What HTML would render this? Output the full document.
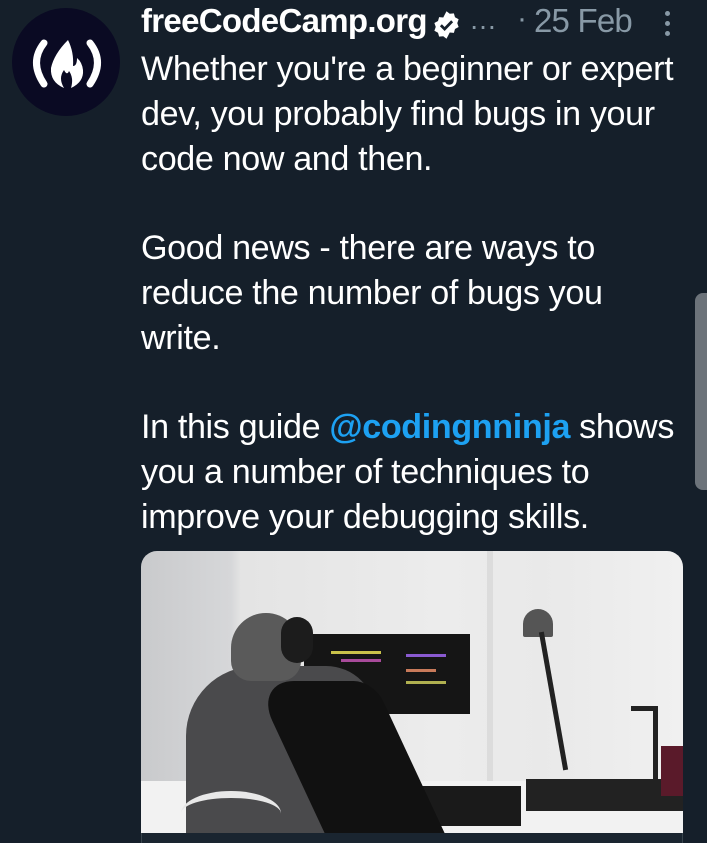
<!DOCTYPE html>
<html><head><meta charset="utf-8"><style>
*{margin:0;padding:0;box-sizing:border-box}
body{width:707px;height:843px;overflow:hidden;background:#151f2a;font-family:"Liberation Sans",sans-serif;position:relative}
.av{position:absolute;left:12px;top:8px;width:108px;height:108px;border-radius:50%;background:#0a0a23}
.name{position:absolute;left:141px;top:2px;color:#fff;font-weight:bold;font-size:33px;letter-spacing:-0.7px;white-space:nowrap}
.ell{position:absolute;left:469px;top:4px;color:#8899a6;font-size:28px}
.dot{position:absolute;left:517px;top:2px;color:#8899a6;font-size:30px}
.date{position:absolute;left:534px;top:2px;color:#8899a6;font-size:33px;letter-spacing:-0.8px;white-space:nowrap}
.dots{position:absolute;left:665px;top:11px;width:5px}
.dots i{display:block;width:5px;height:5px;border-radius:50%;background:#8899a6;margin-bottom:5px}
.txt{position:absolute;left:141px;top:47px;color:#fff;font-size:34.1px;line-height:44.8px;letter-spacing:-0.35px;white-space:nowrap}
.txt a{color:#1da1f2;font-weight:bold;text-decoration:none}
.sb{position:absolute;left:695px;top:293px;width:14px;height:197px;background:#6c737a;border-radius:8px 0 0 8px}
.img{position:absolute;left:141px;top:551px;width:542px;height:282px;border-radius:16px 16px 0 0;overflow:hidden;background:linear-gradient(90deg,#c9cacc 0,#d6d7d9 90px,#e4e4e4 100px,#ececec 300px,#e9e9e9 400px,#f0f0f0 100%)}
.img div{position:absolute}
.bot{position:absolute;left:141px;top:833px;width:542px;height:10px;background:#1a2530;border-left:1px solid #38444d;border-right:1px solid #38444d}
</style></head><body>
<div class="av"><svg width="108" height="108" viewBox="0 0 108 108">
<path d="M32 35 Q17 54 32 76" stroke="#fff" stroke-width="7" fill="none" stroke-linecap="round"/>
<path d="M78 35 Q93 54 78 76" stroke="#fff" stroke-width="7" fill="none" stroke-linecap="round"/>
<path d="M56 32 Q42 46 39 60 Q38 74 52 80 Q46 70 52 62 Q55 68 57 63 Q62 70 59 80 Q72 74 71 62 Q70 54 65 50 Q65 58 61 58 Q62 44 56 32Z" fill="#fff"/>
</svg></div>
<div class="name">freeCodeCamp.org</div>
<svg style="position:absolute;left:431px;top:10px" width="31" height="30" viewBox="0 0 24 24"><path d="M12 1l2.6 2 3.3-.3.9 3.1 2.9 1.6-1.1 3.1 1.1 3.1-2.9 1.6-.9 3.1-3.3-.3L12 23l-2.6-2-3.3.3-.9-3.1-2.9-1.6 1.1-3.1-1.1-3.1 2.9-1.6.9-3.1 3.3.3z" fill="#fff"/><path d="M7.5 12.2l3 3 6-6.2" stroke="#151f2a" stroke-width="2.2" fill="none"/></svg>
<div class="ell">…</div>
<div class="dot">·</div>
<div class="date">25 Feb</div>
<div class="dots"><i></i><i></i><i></i></div>
<div class="txt">Whether you're a beginner or expert<br>dev, you probably find bugs in your<br>code now and then.<br><br>Good news - there are ways to<br>reduce the number of bugs you<br>write.<br><br>In this guide <a>@codingnninja</a> shows<br>you a number of techniques to<br>improve your debugging skills.</div>
<div class="sb"></div>
<div class="img">
<div style="left:346px;top:0;width:6px;height:230px;background:#dcdcdc"></div>
<div style="left:163px;top:83px;width:166px;height:80px;background:#151515"></div>
<div style="left:190px;top:100px;width:50px;height:3px;background:#c9c24a"></div>
<div style="left:200px;top:108px;width:40px;height:3px;background:#a84a9a"></div>
<div style="left:265px;top:103px;width:40px;height:3px;background:#8a5ad0"></div>
<div style="left:265px;top:118px;width:30px;height:3px;background:#c87a5a"></div>
<div style="left:265px;top:130px;width:40px;height:3px;background:#b0b050"></div>
<div style="left:382px;top:58px;width:30px;height:28px;background:#555;border-radius:15px 15px 2px 2px"></div>
<div style="left:410px;top:80px;width:5px;height:140px;background:#222;transform:rotate(-10deg)"></div>
<div style="left:490px;top:155px;width:26px;height:5px;background:#222"></div>
<div style="left:512px;top:155px;width:5px;height:90px;background:#222"></div>
<div style="left:0;top:230px;width:542px;height:52px;background:#f2f2f2"></div>
<div style="left:200px;top:235px;width:180px;height:40px;background:#1a1a1a"></div>
<div style="left:385px;top:228px;width:157px;height:32px;background:#222"></div>
<div style="left:520px;top:195px;width:22px;height:50px;background:#5a1a2a"></div>
<div style="left:45px;top:115px;width:190px;height:180px;background:#4a4a4c;border-radius:70px 50px 0 0"></div>
<div style="left:150px;top:130px;width:120px;height:160px;background:#111;border-radius:40px 20px 0 0;transform:skewX(25deg)"></div>
<div style="left:90px;top:62px;width:70px;height:68px;background:#5a5a5a;border-radius:35px 35px 20px 20px"></div>
<div style="left:140px;top:66px;width:32px;height:46px;background:#1c1c1c;border-radius:16px"></div>
<div style="left:40px;top:240px;width:100px;height:45px;border-top:7px solid #e8e8e8;border-radius:50% 50% 0 0"></div>
</div>
<div class="bot"></div>
</body></html>
